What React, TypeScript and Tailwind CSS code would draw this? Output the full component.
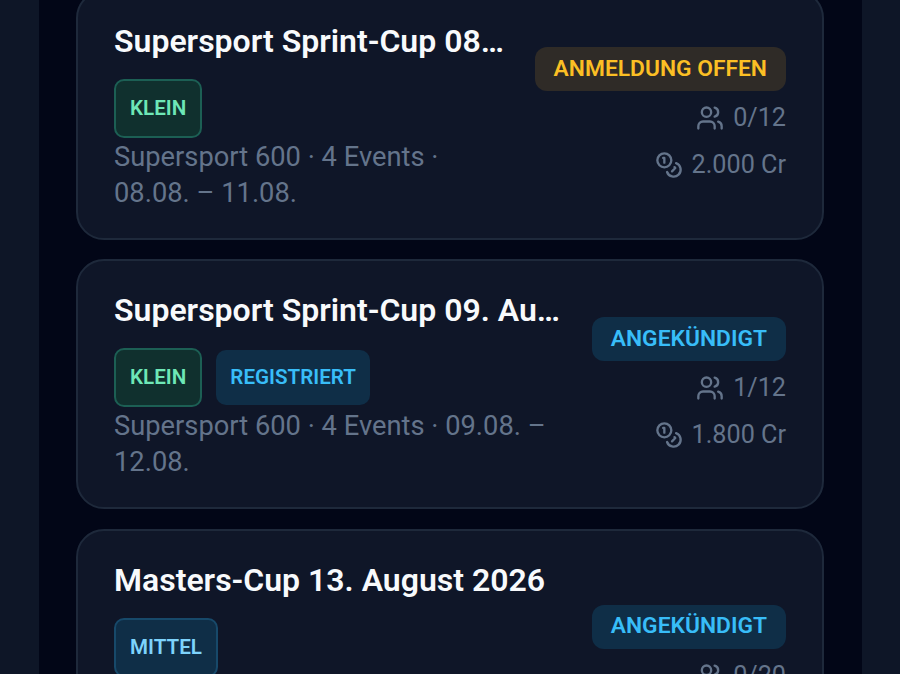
import { Coins, Users } from "lucide-react";

type Tag = { label: string; cls: string };
type Ev = { title: string; tags: Tag[]; desc: string; status: string; statusCls: string; seats: string; cost: string };

const klein = "h-[59px] border-2 border-[#1c5f54] bg-[#10302e] text-[#6ee7b7] px-[14px]";
const mittel = "h-[59px] border-2 border-[#17496a] bg-[#0f2e47] text-[#7dd3fc] px-[14px]";
const reg = "h-[55px] bg-[#0f2e47] text-[#38bdf8] px-[14px]";
const open = "bg-[#2f2b27] text-[#fbbf24]";
const ann = "bg-[#0f2e47] text-[#38bdf8]";

const events: Ev[] = [
  { title: "Supersport Sprint-Cup 08. August 2026", tags: [{ label: "KLEIN", cls: klein }], desc: "Supersport 600 · 4 Events · 08.08. – 11.08.", status: "ANMELDUNG OFFEN", statusCls: open, seats: "0/12", cost: "2.000 Cr" },
  { title: "Supersport Sprint-Cup 09. August 2026", tags: [{ label: "KLEIN", cls: klein }, { label: "REGISTRIERT", cls: reg }], desc: "Supersport 600 · 4 Events · 09.08. – 12.08.", status: "ANGEKÜNDIGT", statusCls: ann, seats: "1/12", cost: "1.800 Cr" },
  { title: "Masters-Cup 13. August 2026", tags: [{ label: "MITTEL", cls: mittel }], desc: "Superbike 1000 · 6 Events · 13.08. – 18.08. · Werksteams und Privatfahrer zugelassen", status: "ANGEKÜNDIGT", statusCls: ann, seats: "0/20", cost: "3.500 Cr" },
];

export default function App() {
  return (
    <div className="h-[674px] overflow-hidden bg-[#0e1627] font-['Roboto',sans-serif]">
      <div className="ml-[39px] h-full w-[823px] overflow-hidden bg-[#020617] pl-[37px] pr-[38px]">
        <div className="-mt-[10.2px] flex flex-col gap-[19.6px]">
          {events.map((e) => (
            <div key={e.title} className="flex items-center gap-[24px] rounded-[28px] border-2 border-[#1e293b] bg-[#0f1628] px-[36px] pb-[27px] pt-[28px]">
              <div className="min-w-0 flex-1">
                <div className="truncate text-[32px] font-semibold leading-[42px] text-[#f8fafc]">{e.title}</div>
                <div className="mt-[17px] flex flex-wrap items-center gap-[14px]">
                  {e.tags.map((t) => (
                    <span key={t.label} className={`flex items-center rounded-[10px] text-[20.6px] font-semibold ${t.cls}`}>{t.label}</span>
                  ))}
                </div>
                <div className="mt-[1px] text-[27.3px] leading-[36px] text-[#64748b]">{e.desc}</div>
              </div>
              <div className="flex shrink-0 flex-col items-end">
                <span className={`flex h-[44px] items-center rounded-[12px] px-[19px] text-[22.8px] font-semibold ${e.statusCls}`}>{e.status}</span>
                <div className="mt-[9px] flex items-center gap-[9px] text-[25.2px] leading-[36px] text-[#64748b]">
                  <Users size={28} strokeWidth={2} />
                  <span>{e.seats}</span>
                </div>
                <div className="mt-[11px] flex items-center gap-[9px] text-[25.2px] leading-[36px] text-[#64748b]">
                  <Coins size={28} strokeWidth={2} />
                  <span>{e.cost}</span>
                </div>
              </div>
            </div>
          ))}
        </div>
      </div>
    </div>
  );
}
